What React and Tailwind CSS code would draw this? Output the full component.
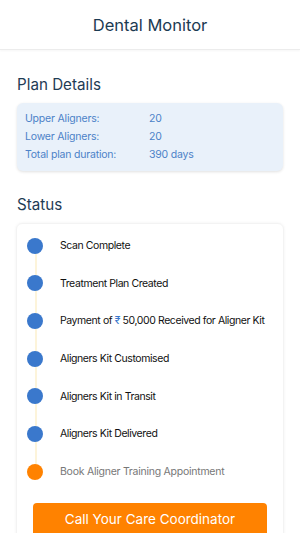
import React from 'react';

const plan = [
  { label: 'Upper Aligners:', value: '20' },
  { label: 'Lower Aligners:', value: '20' },
  { label: 'Total plan duration:', value: '390 days' },
];

const steps = [
  { text: 'Scan Complete', done: true },
  { text: 'Treatment Plan Created', done: true },
  { text: 'payment', done: true },
  { text: 'Aligners Kit Customised', done: true },
  { text: 'Aligners Kit in Transit', done: true },
  { text: 'Aligners Kit Delivered', done: true },
  { text: 'Book Aligner Training Appointment', done: false },
];

const App = () => {
  return (
    <div className="min-h-screen bg-white" style={{ fontFamily: 'Inter, "Noto Sans", sans-serif' }}>
      {/* Header */}
      <div className="h-[50px] flex items-center justify-center pt-[1px] border-b border-[#ececec] shadow-[0_1px_2px_rgba(0,0,0,0.04)]">
        <h1 className="text-[16.5px] text-[#1c3a52]">Dental Monitor</h1>
      </div>

      <div className="px-[17px]">
        <h2 className="mt-[24px] text-[15.2px] leading-[22px] text-[#1f3c55]">Plan Details</h2>

        <div className="mt-[7px] rounded-[6px] bg-[#e9f1fa] shadow-[0_1px_3px_rgba(0,0,0,0.12)] px-[8px] py-[7px]">
          {plan.map((row) => (
            <div key={row.label} className="flex h-[18px] items-center text-[10.5px] tracking-[-0.2px] text-[#4c82c8]">
              <span className="w-[124px]">{row.label}</span>
              <span>{row.value}</span>
            </div>
          ))}
        </div>

        <h2 className="mt-[23px] text-[15.2px] leading-[22px] text-[#1f3c55]">Status</h2>

        <div className="mt-[7px] -mx-px rounded-[6px] border border-[#f3f3f3] shadow-[0_0_3px_rgba(0,0,0,0.06)] pt-[3px] pb-[20px]">
          <div className="flex flex-col">
            {steps.map((s, i) => (
              <div key={i} className="relative flex h-[37.67px] items-center pl-[10px]">
                {i < steps.length - 1 && (
                  <div className="absolute left-[18px] top-1/2 h-full w-[2px] bg-[#fdf4da]" />
                )}
                <span
                  className={
                    'relative z-10 h-[16px] w-[16px] shrink-0 rounded-full ' +
                    (s.done ? 'bg-[#3a78cc]' : 'bg-[#ff8200]')
                  }
                />
                {s.text === 'payment' ? (
                  <span className="ml-[17px] text-[10.5px] tracking-[-0.42px] text-[#111]">
                    Payment of <span className="text-[#3a78cc]">₹</span> 50,000 Received for Aligner Kit
                  </span>
                ) : (
                  <span
                    className={
                      'ml-[17px] text-[10.5px] ' +
                      (s.done ? 'text-[#111] tracking-[-0.42px]' : 'text-[#777] tracking-[-0.25px]')
                    }
                  >
                    {s.text}
                  </span>
                )}
              </div>
            ))}
          </div>

          <div className="mt-[12px] px-[16px]">
            <button className="h-[34px] w-full rounded-[4px] bg-[#ff8200] text-[13.5px] text-white">
              Call Your Care Coordinator
            </button>
          </div>
        </div>
      </div>
    </div>
  );
};

export default App;
